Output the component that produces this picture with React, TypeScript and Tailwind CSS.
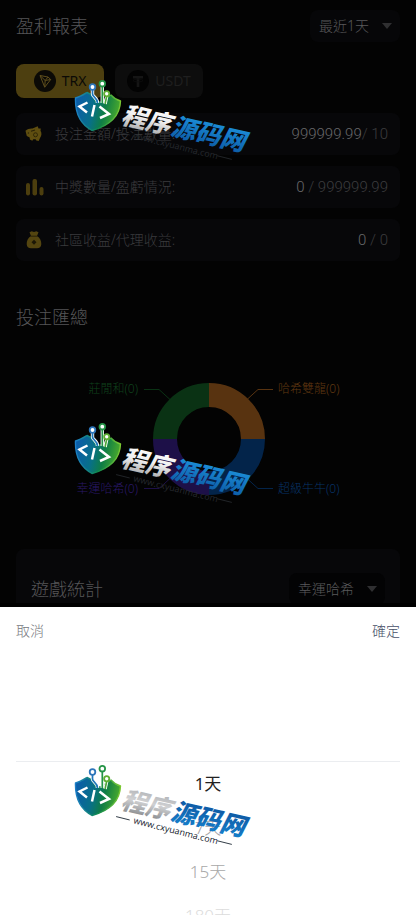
import React, { useId, useState } from 'react';
import clsx from 'clsx';

const UI_FONT = "font-['Noto_Sans','Noto_Sans_CJK_TC',sans-serif] font-light";

/** Small filled triangle used on the right of the drop-down buttons */
function Caret() {
  return (
    <svg viewBox="0 0 10 6" className="h-[6px] w-[10px] text-[#2f2f31]" aria-hidden="true">
      <path d="M0 0h10L5 6z" fill="currentColor" />
    </svg>
  );
}

function TronIcon() {
  return (
    <svg viewBox="0 0 22 22" className="h-[22px] w-[22px]" aria-hidden="true">
      <circle cx="11" cy="11" r="11" fill="#0b0a06" />
      <path
        d="M6 5.500l8 1.500 2.700 2.500-6 7.700zM6 5.500l5.200 5-.5 6.700M11.200 10.500L14 7M11.200 10.500l5.500-1"
        fill="none"
        stroke="#5e4e1c"
        strokeWidth="1"
        strokeLinejoin="round"
      />
    </svg>
  );
}

function TetherIcon() {
  return (
    <svg viewBox="0 0 22 22" className="h-[22px] w-[22px]" aria-hidden="true">
      <circle cx="11" cy="11" r="11" fill="#030303" />
      <path d="M6 6h10v2.500h-3.700V17H9.700V8.500H6z" fill="#151515" />
      <ellipse cx="11" cy="10.500" rx="5" ry="1.400" fill="none" stroke="#0e0e0e" strokeWidth="0.8" />
    </svg>
  );
}

function PiggyIcon() {
  return (
    <svg viewBox="0 0 20 20" className="h-5 w-5" aria-hidden="true">
      <path
        d="M1.500 6.800C3.500 5 6 4.200 8.500 4.500l5.200-2.200.8 2.300 2.300-.2-.3 2.400c1.500 2.200 1.200 5.200-.5 7.200l-1.300 3-2.400-.4-.7-1.300H9.300l-1 1.500-2.400-1.200-.2-2.200L2.800 12l-.6-2.200z"
        fill="#5f4e10"
      />
      <path d="M7 7.200l4-1.200M3.800 8.800l1.200.4" stroke="#2a2207" strokeWidth="1.200" fill="none" />
      <circle cx="11.500" cy="10.800" r="2" fill="none" stroke="#2a2207" strokeWidth="0.900" />
    </svg>
  );
}

function BarsIcon() {
  return (
    <svg viewBox="0 0 20 20" className="h-5 w-5" aria-hidden="true">
      <rect x="2" y="6" width="4" height="12.500" rx="2" fill="#4c3e0e" />
      <rect x="8.500" y="2" width="4.500" height="16.500" rx="2" fill="#4c3e0e" />
      <rect x="15.500" y="10" width="4" height="8.500" rx="2" fill="#4c3e0e" />
    </svg>
  );
}

function MoneyBagIcon() {
  return (
    <svg viewBox="0 0 20 20" className="h-5 w-5" aria-hidden="true">
      <path
        d="M5.500 2.200l2.200-1 2.300.8 2.300-.8 2.200 1L13 6c2.900 1.700 4.500 5 4.300 8.300-.1 2.600-1.700 3.900-4.300 3.900H7c-2.600 0-4.200-1.300-4.300-3.900C2.500 11 4.100 7.700 7 6z"
        fill="#544510"
      />
      <path d="M6.500 6.200h7" stroke="#1c1706" strokeWidth="0.800" />
      <path d="M10 9.700l2.500 2.500-2.500 2.500-2.500-2.500z" fill="#1c1706" />
    </svg>
  );
}

interface SelectButtonProps {
  label: string;
  className?: string;
}

function SelectButton({ label, className }: SelectButtonProps) {
  return (
    <button
      type="button"
      aria-haspopup="listbox"
      className={clsx('flex items-center justify-between rounded-lg text-sm text-[#59595b]', className)}
    >
      {label}
      <Caret />
    </button>
  );
}

interface StatRowProps {
  icon: React.ReactNode;
  label: string;
  value: string;
  secondary: string;
}

function StatRow({ icon, label, value, secondary }: StatRowProps) {
  return (
    <li className="flex h-[42px] items-center rounded-lg bg-[#070709] pr-3 pl-2">
      {icon}
      <span className="ml-[11px] text-sm text-[#3a3a3d]">{label}</span>
      <span className="ml-auto font-['Roboto',sans-serif] text-[15px] whitespace-pre text-[#3c3c3e]">
        <span className="text-[#68686a]">{value}</span>
        {secondary}
      </span>
    </li>
  );
}

/** Donut with four equal shares and a leader line to each label */
function BetChart() {
  return (
    <svg
      viewBox="0 0 384 140"
      className="mx-auto mt-[39px] block h-[140px] w-[384px] max-w-full text-[12px]"
      role="img"
      aria-label="投注匯總"
    >
      <g fill="none" strokeWidth="24">
        <path d="M149 69A44 44 0 0 1 193 25" stroke="#0a3214" />
        <path d="M193 25A44 44 0 0 1 237 69" stroke="#583310" />
        <path d="M237 69A44 44 0 0 1 193 113" stroke="#03244a" />
        <path d="M193 113A44 44 0 0 1 149 69" stroke="#1d1048" />
      </g>
      <g fill="none" strokeWidth="1">
        <path d="M128 19.500h15l11 10" stroke="#0a3214" />
        <path d="M257 19.500h-15l-11 10" stroke="#583310" />
        <path d="M128 118.500h15l11-10" stroke="#1d1048" />
        <path d="M257 118.500h-15l-11-10" stroke="#03244a" />
      </g>
      <text x="122" y="23" textAnchor="end" fill="#0f421c">莊閒和(0)</text>
      <text x="262" y="23" fill="#613811">哈希雙龍(0)</text>
      <text x="122" y="123" textAnchor="end" fill="#2a1868">幸運哈希(0)</text>
      <text x="262" y="123" fill="#073266">超級牛牛(0)</text>
    </svg>
  );
}

interface BrandMarkProps {
  tone: 'dark' | 'light';
  className?: string;
}

/** Shield logo with the slanted site name beside it */
function BrandMark({ tone, className }: BrandMarkProps) {
  const id = useId();
  const light = tone === 'light';
  const urlColor = light ? '#15202c' : '#26292e';

  return (
    <svg viewBox="0 0 180 86" className={clsx('pointer-events-none absolute h-[86px] w-[180px]', className)} aria-hidden="true">
      <defs>
        <linearGradient id={`${id}-shield`} x1="0" y1="0.300" x2="1" y2="0.500">
          <stop offset="0" stopColor="#0c5cab" />
          <stop offset="0.400" stopColor="#087088" />
          <stop offset="0.650" stopColor="#0f7d45" />
          <stop offset="1" stopColor="#4fae2b" />
        </linearGradient>
        <linearGradient id={`${id}-edge`} x1="0" y1="0" x2="1" y2="0">
          <stop offset="0" stopColor="#1c7fc6" />
          <stop offset="0.500" stopColor="#0f8a4e" />
          <stop offset="1" stopColor="#7bc832" />
        </linearGradient>
        <linearGradient id={`${id}-silver`} x1="0" y1="0" x2="0" y2="1">
          <stop offset="0" stopColor={light ? '#a5a7aa' : '#ffffff'} />
          <stop offset="0.500" stopColor={light ? '#d0d1d3' : '#f1f1f1'} />
          <stop offset="1" stopColor={light ? '#797c80' : '#9b9da0'} />
        </linearGradient>
        <linearGradient id={`${id}-blue`} x1="0" y1="0" x2="0" y2="1">
          <stop offset="0" stopColor={light ? '#0d4f99' : '#1f9be6'} />
          <stop offset="1" stopColor={light ? '#1684d0' : '#0b559f'} />
        </linearGradient>
      </defs>

      <path
        d="M1.500 18C6 17 9 15 13 12.500L18 15l4 7h7l3-4 5-3C40 18.500 43 20 46.500 21C46 35 38 45 18 50.500C6 44 1 32 1.500 18z"
        fill={`url(#${id}-shield)`}
        stroke={`url(#${id}-edge)`}
        strokeWidth="1.400"
        strokeLinejoin="round"
      />
      <g fill="none" stroke="#ffffff" strokeWidth="3.400">
        <path d="M18.500 9v5c0 3 5 3.500 5 9" />
        <path d="M28.300 6v17" />
        <path d="M32.700 15c0 4-1 4-1.500 9" />
      </g>
      <g fill="none" strokeWidth="1.700">
        <path d="M18.500 9v5c0 3 5 3.500 5 9" stroke="#1f76b8" />
        <path d="M28.300 6v17" stroke="#259447" />
        <path d="M32.700 15c0 4-1 4-1.500 9" stroke="#4da63a" />
      </g>
      <g fill="#ffffff" strokeWidth="1.800">
        <circle cx="18.500" cy="7" r="2.800" stroke="#2d75ba" />
        <circle cx="28.300" cy="3.700" r="2.800" stroke="#259447" />
        <circle cx="32.700" cy="13.800" r="2.600" stroke="#5fae33" />
      </g>
      <path
        d="M13.500 22.500L5.500 26.500l7.500 6M20.500 25l-2.500 11.500M25.500 26.500l9.500 7.500-9 4"
        fill="none"
        stroke="#ffffff"
        strokeWidth="2.500"
      />

      <g transform="rotate(13 46 43)" className="font-['Noto_Sans_CJK_SC',sans-serif] text-[25px] font-black italic">
        <text x="46" y="43" fill={`url(#${id}-silver)`}>程序</text>
        <text x="97" y="43" fill={`url(#${id}-blue)`}>源码网</text>
      </g>
      <g transform="rotate(14 58 54)">
        <path d="M42 55.500h14M146 54.500h15" stroke={urlColor} strokeWidth="0.800" />
        <text x="60" y="58" fill={urlColor} className="font-['Open_Sans',sans-serif] text-[9px] font-normal">
          www.cxyuanma.com
        </text>
      </g>
    </svg>
  );
}

const RANGES = [
  { label: '1天', className: 'text-[#222222] font-normal' },
  { label: '7天', className: 'text-[#a5a5a5]' },
  { label: '15天', className: 'text-[#a8a8a8]' },
  { label: '180天', className: 'text-[#dcdcdc]' },
];

function RangePicker() {
  return (
    <section
      role="dialog"
      aria-label="最近1天"
      className="fixed inset-x-0 bottom-0 overflow-hidden border-t-4 border-black bg-white"
    >
      <header className="flex h-12 items-center justify-between px-4 text-sm">
        <button type="button" className="text-[#75777c]">取消</button>
        <button type="button" className="text-[#475068]">確定</button>
      </header>
      <div className="h-[260px] overflow-hidden px-4 pt-[106px]">
        <ul className="border-t border-[#ebedf0] text-center text-[17px]">
          {RANGES.map((range) => (
            <li key={range.label} className={clsx('h-11 leading-[44px]', range.className)}>
              {range.label}
            </li>
          ))}
        </ul>
      </div>
      <BrandMark tone="light" className="top-[158px] left-[74px]" />
    </section>
  );
}

export default function App() {
  const [coin, setCoin] = useState('TRX');

  return (
    <div className={clsx('relative h-screen overflow-hidden bg-[#030303]', UI_FONT)}>
      <main className="px-4 pt-[10px]">
        <header className="flex items-center justify-between">
          <h1 className="text-lg text-[#555557]">盈利報表</h1>
          <SelectButton label="最近1天" className="h-8 w-[90px] bg-[#060608] pr-2 pl-[9px]" />
        </header>

        <div className="mt-[22px] flex gap-[11px]">
          <button
            type="button"
            aria-pressed={coin === 'TRX'}
            onClick={() => setCoin('TRX')}
            className="flex h-[34px] w-[88px] items-center justify-center gap-[6px] rounded-lg bg-[#4d3f10] text-sm font-normal text-[#0b0a06]"
          >
            <TronIcon />
            TRX
          </button>
          <button
            type="button"
            aria-pressed={coin === 'USDT'}
            onClick={() => setCoin('USDT')}
            className="flex h-[34px] w-[88px] items-center justify-center gap-[6px] rounded-lg bg-[#0d0d0d] text-sm font-normal text-[#1f1f1f]"
          >
            <TetherIcon />
            USDT
          </button>
        </div>

        <ul className="mt-[15px] flex flex-col gap-[11px]">
          <StatRow icon={<PiggyIcon />} label="投注金額/投注數量:" value="999999.99" secondary="/ 10" />
          <StatRow icon={<BarsIcon />} label="中獎數量/盈虧情況:" value="0" secondary=" / 999999.99" />
          <StatRow icon={<MoneyBagIcon />} label="社區收益/代理收益:" value="0" secondary=" / 0" />
        </ul>

        <h2 className="mt-[42px] text-lg text-[#555557]">投注匯總</h2>
        <BetChart />

        <section className="mt-[39px] h-[120px] rounded-lg bg-[#070709] px-[15px] pt-6">
          <header className="flex items-center justify-between">
            <h2 className="text-lg text-[#555557]">遊戲統計</h2>
            <SelectButton label="幸運哈希" className="h-8 w-[96px] bg-[#030304] pr-2 pl-[9px]" />
          </header>
        </section>
      </main>

      <BrandMark tone="dark" className="top-[80px] left-[74px]" />
      <BrandMark tone="dark" className="top-[423px] left-[74px]" />
      <RangePicker />
    </div>
  );
}
